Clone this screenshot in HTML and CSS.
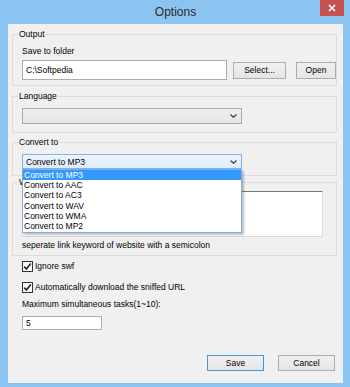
FILE: index.html
```html
<!DOCTYPE html>
<html lang="en">

<head>
    <meta charset="UTF-8">
    <meta name="viewport" content="width=device-width, initial-scale=1.0">
    <title>Options</title>
    <link rel="stylesheet" href="styles.css">
</head>

<body>
    <div class="window">
        <!-- 标题栏 -->
        <div class="titlebar">
            <span class="title">Options</span>
            <a href="javascript:;" class="close">
                <svg width="8" height="8" viewBox="0 0 8 8">
                    <path d="M1 1 L7 7 M7 1 L1 7" stroke="#fff" stroke-width="1.6" />
                </svg>
            </a>
        </div>

        <div class="content">
            <!-- 输出目录 -->
            <fieldset class="group group-output">
                <legend>Output</legend>
                <div class="label">Save to folder</div>
                <div class="row">
                    <div class="textbox path">C:\Softpedia</div>
                    <button class="btn btn-select">Select...</button>
                    <button class="btn btn-open">Open</button>
                </div>
            </fieldset>

            <!-- 语言 -->
            <fieldset class="group group-language">
                <legend>Language</legend>
                <div class="combo">
                    <span></span>
                    <svg class="chevron" width="7" height="4" viewBox="0 0 7 4">
                        <path d="M0.5 0.5 L3.5 3.3 L6.5 0.5" fill="none" stroke="#444" stroke-width="1.2" />
                    </svg>
                </div>
            </fieldset>

            <!-- 转换格式 -->
            <fieldset class="group group-convert">
                <legend>Convert to</legend>
                <div class="combo-wrap">
                    <div class="combo focus">
                        <span>Convert to MP3</span>
                        <svg class="chevron" width="7" height="4" viewBox="0 0 7 4">
                            <path d="M0.5 0.5 L3.5 3.3 L6.5 0.5" fill="none" stroke="#444" stroke-width="1.2" />
                        </svg>
                    </div>
                    <!-- 下拉列表 -->
                    <ul class="dropdown">
                        <li class="current">Convert to MP3</li>
                        <li>Convert to AAC</li>
                        <li>Convert to AC3</li>
                        <li>Convert to WAV</li>
                        <li>Convert to WMA</li>
                        <li>Convert to MP2</li>
                    </ul>
                </div>
            </fieldset>

            <!-- 网站关键字 (标题被下拉列表挡住) -->
            <fieldset class="group group-sites">
                <legend>W</legend>
                <div class="textarea"></div>
                <div class="label hint">seperate link keyword of website with a semicolon</div>
            </fieldset>

            <label class="check check-swf">
                <span class="box">
                    <svg width="9" height="9" viewBox="0 0 9 9">
                        <path d="M1.2 4.6 L3.4 7 L7.8 1.4" fill="none" stroke="#222" stroke-width="1.6" />
                    </svg>
                </span>
                Ignore swf
            </label>
            <label class="check check-auto">
                <span class="box">
                    <svg width="9" height="9" viewBox="0 0 9 9">
                        <path d="M1.2 4.6 L3.4 7 L7.8 1.4" fill="none" stroke="#222" stroke-width="1.6" />
                    </svg>
                </span>
                Automatically download the sniffed URL
            </label>

            <div class="label tasks-label">Maximum simultaneous tasks(1~10):</div>
            <div class="textbox tasks">5</div>

            <div class="actions">
                <button class="btn btn-save">Save</button>
                <button class="btn btn-cancel">Cancel</button>
            </div>
        </div>
    </div>
</body>

</html>
```

FILE: styles.css
```css
* {
    padding: 0;
    margin: 0;
    box-sizing: border-box;
}

ul,
li {
    list-style: none
}

a {
    text-decoration: none;
}

body {
    width: 350px;
    height: 387px;
    overflow: hidden;
    background-color: #8cc4f1;
    font-family: "Liberation Sans", Arial, sans-serif;
    font-size: 8.5px;
    color: #000;
}

.window {
    padding: 0 7px 4px 8px;
}

.titlebar {
    position: relative;
    height: 24px;
    display: flex;
    align-items: center;
    justify-content: center;
}

.title {
    font-size: 12px;
    color: #2b2b2b;
}

.close {
    position: absolute;
    top: 0;
    right: -1px;
    width: 24px;
    height: 16px;
    background-color: #c75050;
    display: flex;
    align-items: center;
    justify-content: center;
}

.content {
    height: 359px;
    background-color: #f0f0f0;
    padding: 5px 6px 0 4px;
}

/* 分组框 */
.group {
    border: 1px solid #dcdcdc;
    padding: 7px 0 5px 9px;
}

.group legend {
    margin-left: -4px;
    padding: 0 1px;
    line-height: 10px;
}

.group-language {
    margin-top: 5px;
    padding-bottom: 8px;
}

.group-convert {
    position: relative;
    margin-top: 4px;
    padding-bottom: 6px;
}

.group-sites {
    margin-top: 1px;
    padding-top: 4px;
    padding-right: 13px;
}

.label {
    line-height: 10px;
}

.row {
    display: flex;
    align-items: center;
    margin-top: 4px;
}

.textbox {
    background-color: #fff;
    border: 1px solid #abadb3;
    padding-left: 3px;
}

.path {
    width: 205px;
    height: 20px;
    line-height: 18px;
}

.btn {
    height: 17px;
    border: 1px solid #acacac;
    background: linear-gradient(#f0f0f0, #e5e5e5);
    font: inherit;
    color: #000;
}

.btn-select {
    width: 53px;
    margin-left: 6px;
}

.btn-open {
    width: 40px;
    margin-left: 10px;
}

/* 下拉框 */
.combo {
    width: 220px;
    height: 16px;
    border: 1px solid #acacac;
    background: linear-gradient(#f0f0f0, #e5e5e5);
    display: flex;
    align-items: center;
    justify-content: space-between;
    padding: 0 4px 0 3px;
}

.combo.focus {
    height: 15px;
    border-color: #7eb4ea;
    background: linear-gradient(#ecf4fc, #dcecfc);
}

.combo-wrap {
    position: relative;
    width: 220px;
}

.dropdown {
    position: absolute;
    top: 100%;
    left: 0;
    z-index: 2;
    width: 220px;
    background-color: #fff;
    border: 1px solid #86acd8;
    padding-bottom: 1px;
    box-shadow: 2px 2px 2px rgba(0, 0, 0, .25);
}

.dropdown li {
    height: 10.2px;
    line-height: 10.2px;
    padding-left: 1px;
}

.dropdown .current {
    background-color: #3399ff;
    color: #fff;
}

.textarea {
    height: 46px;
    background-color: #fff;
    border: 1px solid #d9d9d9;
    border-top-color: #7a7a7a;
}

.hint {
    margin-top: 3px;
}

/* 复选框 */
.check {
    display: flex;
    align-items: center;
    margin-left: 10px;
    line-height: 11px;
}

.check .box {
    width: 11px;
    height: 11px;
    border: 1px solid #333;
    background-color: #fff;
    margin-right: 2px;
    display: flex;
    align-items: center;
    justify-content: center;
}

.check-swf {
    margin-top: 5px;
}

.check-auto {
    margin-top: 10px;
}

.tasks-label {
    margin: 6px 0 0 10px;
}

.tasks {
    width: 80px;
    height: 14px;
    line-height: 12px;
    margin: 7px 0 0 10px;
}

.actions {
    display: flex;
    justify-content: flex-end;
    margin: 25px 2px 0 0;
}

.actions .btn {
    width: 57px;
    height: 16px;
}

.btn-save {
    border-color: #3c9ae0;
}

.btn-cancel {
    margin-left: 14px;
}
```
